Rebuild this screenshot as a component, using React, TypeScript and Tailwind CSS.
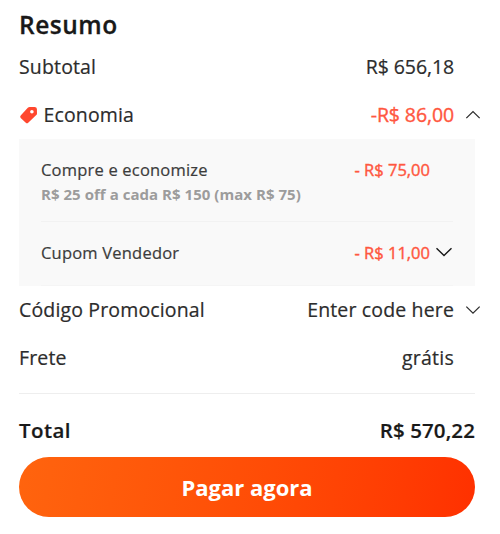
import React from 'react';

interface ChevronProps {
  up?: boolean;
  className?: string;
}

const Chevron: React.FC<ChevronProps> = ({ up, className }) => (
  <svg viewBox="0 0 18 10" fill="none" stroke="currentColor" strokeWidth="1.4" className={className}>
    <path d={up ? 'M1.5 8.5L9 1.2L16.5 8.5' : 'M1.5 1.2L9 8.5L16.5 1.2'} />
  </svg>
);

const TagIcon = () => (
  <svg viewBox="0 0 18 18" className="h-[18px] w-[18px] text-[#ff472e]" fill="currentColor">
    <path
      fillRule="evenodd"
      d="M8.8 1.8Q9.6 1 10.6 1L15.6.9Q17.8.9 17.9 3.1L18 7.4Q18 8.4 17.3 9.1L9.2 16.8Q8 17.9 6.8 16.8L1.7 12Q.6 10.8 1.7 9.6ZM12.9 3.9A1.8 1.8 0 1 0 12.9 7.5A1.8 1.8 0 1 0 12.9 3.9Z"
    />
  </svg>
);

interface RowProps {
  label: React.ReactNode;
  value: string;
  valueClass?: string;
  chevron?: React.ReactNode;
}

const Row: React.FC<RowProps> = ({ label, value, valueClass, chevron }) => (
  <div className="flex h-12 items-center text-[19.5px] [-webkit-text-stroke:0.2px]">
    <span className="flex items-center gap-[6.5px] tracking-[0.15px]">{label}</span>
    <span className={`ml-auto ${valueClass ?? ''}`}>{value}</span>
    <span className="-mr-[6px] flex w-[27px] justify-end">{chevron}</span>
  </div>
);

export default function App() {
  return (
    <div className="h-[534px] w-[500px] bg-white pr-[25px] pl-[19px] font-['Open_Sans','Noto_Sans',sans-serif] leading-none text-[#2c2c2c]">
      <h2 className="flex h-[43px] items-center pt-[7px] text-[24.5px] font-semibold tracking-[0.5px] text-[#191919] [-webkit-text-stroke:0.3px]">
        Resumo
      </h2>
      <Row label="Subtotal" value="R$ 656,18" valueClass="tracking-[-0.1px]" />
      <Row
        label={<><TagIcon />Economia</>}
        value="-R$ 86,00"
        valueClass="tracking-[-0.1px] text-[#ff5740] [-webkit-text-stroke:0.35px]"
        chevron={<Chevron up className="h-[10px] w-[16px]" />}
      />

      <div className="h-[147px] bg-[#f9f9f9] px-[22px] text-[16.5px] text-[#3c3c3c] [-webkit-text-stroke:0.2px]">
        <div className="h-[83px] border-b border-[#f2f2f2] pt-[23px]">
          <div className="flex justify-between pr-[23px]">
            <span className="tracking-[0.2px]">Compre e economize</span>
            <span className="text-[#ff5740] [-webkit-text-stroke:0.4px]">- R$ 75,00</span>
          </div>
          <p className="mt-[8px] text-[15px] font-bold tracking-[0.04px] text-[#9c9c9c] [-webkit-text-stroke:0px]">
            R$ 25 off a cada R$ 150 (max R$ 75)
          </p>
        </div>
        <div className="flex h-[64px] items-center border-b border-[#f5f5f5]">
          <span className="tracking-[0.2px]">Cupom Vendedor</span>
          <span className="ml-auto text-[#ff5740] [-webkit-text-stroke:0.4px]">- R$ 11,00</span>
          <Chevron className="mb-[4px] ml-[5px] h-[10px] w-[18px] text-[#191919]" />
        </div>
      </div>

      <Row
        label="Código Promocional"
        value="Enter code here"
        valueClass="tracking-[0.15px]"
        chevron={<Chevron className="h-[10px] w-[16px]" />}
      />
      <Row label="Frete" value="grátis" valueClass="tracking-[0.25px]" />

      <div className="mt-[11px] border-t border-[#eeeeee]" />
      <div className="flex h-[63px] items-center justify-between pt-[10px] text-[20.5px] font-semibold text-[#191919] [-webkit-text-stroke:0.2px]">
        <span className="tracking-[0.4px]">Total</span>
        <span className="tracking-[0.1px]">R$ 570,22</span>
      </div>
      <button className="h-[60px] w-full rounded-full bg-linear-100 from-[#ff640e] to-[#ff3000] pb-[1px] text-[22px] font-bold text-white">
        Pagar agora
      </button>
    </div>
  );
}
